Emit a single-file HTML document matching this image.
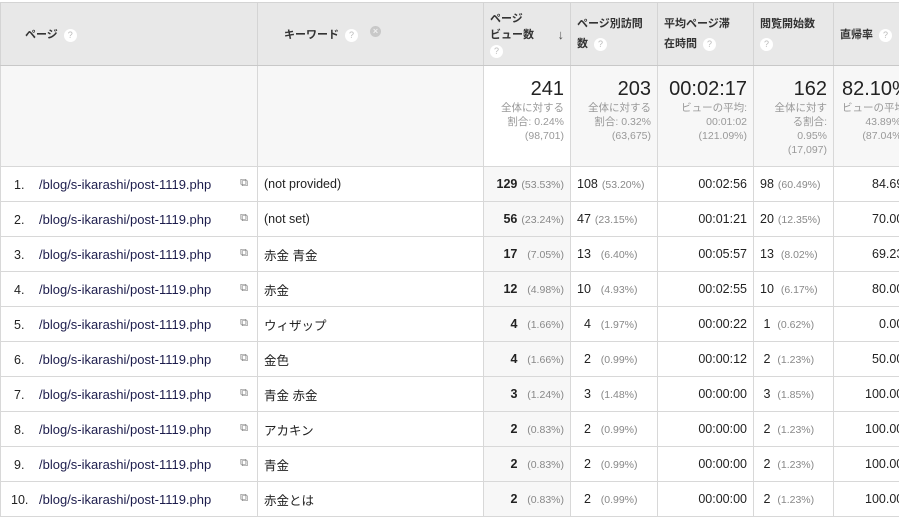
<!DOCTYPE html>
<html><head><meta charset="utf-8"><style>
*{margin:0;padding:0;box-sizing:border-box}
body{width:899px;height:518px;overflow:hidden;background:#fff;font-family:"Liberation Sans","Noto Sans CJK JP",sans-serif;font-size:12px;color:#222}
table{position:absolute;left:0;top:2px;border-collapse:collapse;table-layout:fixed;width:960px;border-top:1px solid #ccc}
td,th{border:1px solid #d8d8d8;white-space:nowrap;overflow:hidden}
th{background:#e8e8e8;font-weight:bold;font-size:11px;text-align:left;vertical-align:middle;height:63px;padding:0 6px;color:#333;border-color:#d4d4d4;border-bottom:1px solid #c8c8c8}
tr.sum td{height:101px;background:#f7f7f7;vertical-align:top;text-align:right;padding:12px 6px 0 4px;color:#999;font-size:10.5px;line-height:14px}
tr.sum td.s{background:#fff}
tr.sum td .big{font-size:20px;color:#222;line-height:22px;margin-bottom:1px;display:block}
tr.r td{height:35px;padding:0 6px;font-size:12.5px}
tr.r td.s{background:#f7f7f7}
.q{display:inline-block;width:13px;height:13px;border-radius:50%;background:#fff;color:#bbb;font-size:9px;text-align:center;line-height:13px;font-weight:normal;vertical-align:middle;margin-left:6px}
.x{display:inline-block;width:11px;height:11px;border-radius:50%;background:#c8c8c8;color:#eee;font-size:9px;text-align:center;line-height:11px;vertical-align:top;margin-left:12px;margin-top:0px}
.p{color:#888;font-size:10.5px;margin-left:4px}
.n{display:inline-block;width:32px;padding-left:7px}
.lnk{color:#1c1c4c;font-size:13px}
.ic{float:right;color:#777;font-size:11px;margin-right:3px}
.rt{text-align:right}
</style></head><body>
<table>
<colgroup><col style="width:257px"><col style="width:226px"><col style="width:87px"><col style="width:87px"><col style="width:96px"><col style="width:80px"><col style="width:127px"></colgroup>
<tr>
<th style="padding-left:24px">ページ<span class="q">?</span></th>
<th style="padding-left:26px">キーワード<span class="q">?</span><span class="x">×</span></th>
<th style="vertical-align:top;padding-top:8px;line-height:16px;position:relative">ページ<br>ビュー数<span style="position:absolute;right:6px;top:24px;font-size:13px;color:#555">↓</span><br><span class="q" style="margin-left:0">?</span></th>
<th style="line-height:20px">ページ別訪問<br>数<span class="q">?</span></th>
<th style="line-height:20px">平均ページ滞<br>在時間<span class="q">?</span></th>
<th style="line-height:20px">閲覧開始数<br><span class="q" style="margin-left:0">?</span></th>
<th>直帰率<span class="q">?</span></th>
</tr>
<tr class="sum">
<td></td><td></td>
<td class="s"><span class="big">241</span>全体に対する<br>割合: 0.24%<br>(98,701)</td>
<td><span class="big">203</span>全体に対する<br>割合: 0.32%<br>(63,675)</td>
<td><span class="big">00:02:17</span>ビューの平均:<br>00:01:02<br>(121.09%)</td>
<td><span class="big">162</span>全体に対す<br>る割合:<br>0.95%<br>(17,097)</td>
<td style="text-align:left;padding-left:8px"><span class="big">82.10%</span>ビューの平均:<br>&nbsp;&nbsp;&nbsp;&nbsp;&nbsp;&nbsp;&nbsp;&nbsp;43.89%<br>&nbsp;&nbsp;&nbsp;&nbsp;&nbsp;&nbsp;&nbsp;(87.04%)</td>
</tr>
<tr class="r"><td><span class="n">1.</span><span class="lnk">/blog/s-ikarashi/post-1119.php</span><span class="ic">⧉</span></td><td>(not provided)</td><td class="s rt"><b>129</b><span class="p">(53.53%)</span></td><td>108<span class="p">(53.20%)</span></td><td class="rt">00:02:56</td><td>98<span class="p">(60.49%)</span></td><td style="padding-left:38px">84.69%</td></tr>
<tr class="r"><td><span class="n">2.</span><span class="lnk">/blog/s-ikarashi/post-1119.php</span><span class="ic">⧉</span></td><td>(not set)</td><td class="s rt"><b>56</b><span class="p">(23.24%)</span></td><td>47<span class="p">(23.15%)</span></td><td class="rt">00:01:21</td><td>20<span class="p">(12.35%)</span></td><td style="padding-left:38px">70.00%</td></tr>
<tr class="r"><td><span class="n">3.</span><span class="lnk">/blog/s-ikarashi/post-1119.php</span><span class="ic">⧉</span></td><td>赤金 青金</td><td class="s rt"><b>17</b><span class="p">&nbsp;&nbsp;(7.05%)</span></td><td>13<span class="p">&nbsp;&nbsp;(6.40%)</span></td><td class="rt">00:05:57</td><td>13<span class="p">&nbsp;(8.02%)</span></td><td style="padding-left:38px">69.23%</td></tr>
<tr class="r"><td><span class="n">4.</span><span class="lnk">/blog/s-ikarashi/post-1119.php</span><span class="ic">⧉</span></td><td>赤金</td><td class="s rt"><b>12</b><span class="p">&nbsp;&nbsp;(4.98%)</span></td><td>10<span class="p">&nbsp;&nbsp;(4.93%)</span></td><td class="rt">00:02:55</td><td>10<span class="p">&nbsp;(6.17%)</span></td><td style="padding-left:38px">80.00%</td></tr>
<tr class="r"><td><span class="n">5.</span><span class="lnk">/blog/s-ikarashi/post-1119.php</span><span class="ic">⧉</span></td><td>ウィザップ</td><td class="s rt"><b>4</b><span class="p">&nbsp;&nbsp;(1.66%)</span></td><td>&nbsp;&nbsp;4<span class="p">&nbsp;&nbsp;(1.97%)</span></td><td class="rt">00:00:22</td><td>&nbsp;1<span class="p">&nbsp;(0.62%)</span></td><td style="padding-left:38px">&nbsp;&nbsp;0.00%</td></tr>
<tr class="r"><td><span class="n">6.</span><span class="lnk">/blog/s-ikarashi/post-1119.php</span><span class="ic">⧉</span></td><td>金色</td><td class="s rt"><b>4</b><span class="p">&nbsp;&nbsp;(1.66%)</span></td><td>&nbsp;&nbsp;2<span class="p">&nbsp;&nbsp;(0.99%)</span></td><td class="rt">00:00:12</td><td>&nbsp;2<span class="p">&nbsp;(1.23%)</span></td><td style="padding-left:38px">50.00%</td></tr>
<tr class="r"><td><span class="n">7.</span><span class="lnk">/blog/s-ikarashi/post-1119.php</span><span class="ic">⧉</span></td><td>青金 赤金</td><td class="s rt"><b>3</b><span class="p">&nbsp;&nbsp;(1.24%)</span></td><td>&nbsp;&nbsp;3<span class="p">&nbsp;&nbsp;(1.48%)</span></td><td class="rt">00:00:00</td><td>&nbsp;3<span class="p">&nbsp;(1.85%)</span></td><td style="padding-left:31px">100.00%</td></tr>
<tr class="r"><td><span class="n">8.</span><span class="lnk">/blog/s-ikarashi/post-1119.php</span><span class="ic">⧉</span></td><td>アカキン</td><td class="s rt"><b>2</b><span class="p">&nbsp;&nbsp;(0.83%)</span></td><td>&nbsp;&nbsp;2<span class="p">&nbsp;&nbsp;(0.99%)</span></td><td class="rt">00:00:00</td><td>&nbsp;2<span class="p">&nbsp;(1.23%)</span></td><td style="padding-left:31px">100.00%</td></tr>
<tr class="r"><td><span class="n">9.</span><span class="lnk">/blog/s-ikarashi/post-1119.php</span><span class="ic">⧉</span></td><td>青金</td><td class="s rt"><b>2</b><span class="p">&nbsp;&nbsp;(0.83%)</span></td><td>&nbsp;&nbsp;2<span class="p">&nbsp;&nbsp;(0.99%)</span></td><td class="rt">00:00:00</td><td>&nbsp;2<span class="p">&nbsp;(1.23%)</span></td><td style="padding-left:31px">100.00%</td></tr>
<tr class="r"><td><span class="n" style="padding-left:4px">10.</span><span class="lnk">/blog/s-ikarashi/post-1119.php</span><span class="ic">⧉</span></td><td>赤金とは</td><td class="s rt"><b>2</b><span class="p">&nbsp;&nbsp;(0.83%)</span></td><td>&nbsp;&nbsp;2<span class="p">&nbsp;&nbsp;(0.99%)</span></td><td class="rt">00:00:00</td><td>&nbsp;2<span class="p">&nbsp;(1.23%)</span></td><td style="padding-left:31px">100.00%</td></tr>
</table>
</body></html>
